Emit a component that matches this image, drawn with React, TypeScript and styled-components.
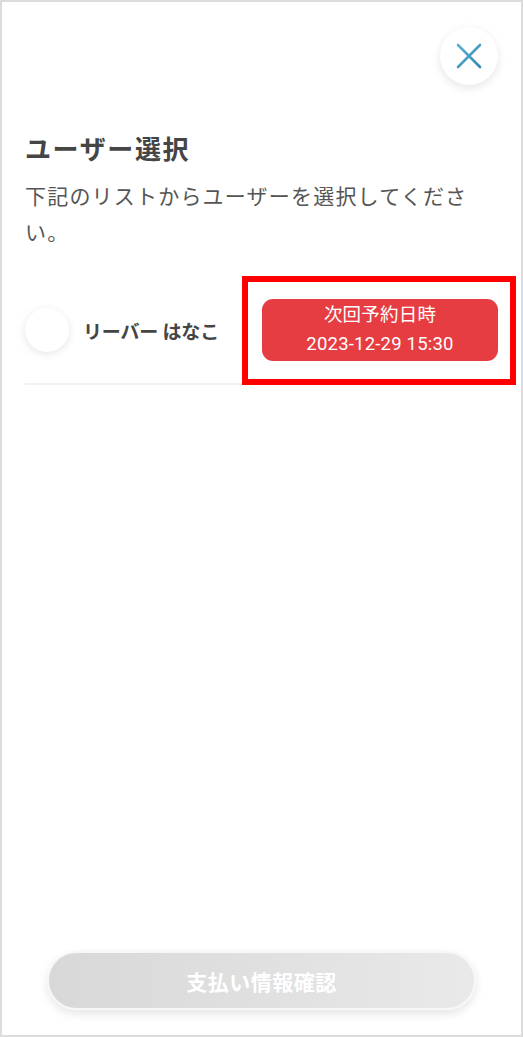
import React from "react";
import styled, { createGlobalStyle } from "styled-components";

const GlobalStyle = createGlobalStyle`
  html, body { margin: 0; padding: 0; background: #ffffff; }
  body { font-family: Roboto, "Noto Sans CJK JP", sans-serif; }
  * { box-sizing: border-box; }
`;

const Frame = styled.div`
  width: 523px;
  height: 1037px;
  border: 2px solid #dcdcdc;
  background: #ffffff;
  display: flex;
  flex-direction: column;
  padding: 25px 23px 25px;
`;

const Header = styled.div`
  display: flex;
  justify-content: flex-end;
`;

const CloseButton = styled.button`
  width: 58px;
  height: 58px;
  border-radius: 50%;
  border: none;
  background: #ffffff;
  box-shadow: 0 3px 10px rgba(0, 0, 0, 0.1);
  display: flex;
  align-items: center;
  justify-content: center;
  padding: 0;
  cursor: pointer;
`;

const Title = styled.h1`
  margin: 45px 0 0;
  font-family: Roboto, "Noto Sans CJK JP", sans-serif;
  font-size: 26px;
  line-height: 40px;
  font-weight: 700;
  letter-spacing: 1.6px;
  color: #454545;
`;

const Description = styled.p`
  margin: 9px 0 0;
  padding-right: 16px;
  font-size: 21px;
  line-height: 36px;
  letter-spacing: 1.2px;
  color: #555555;
`;

const UserRow = styled.div`
  margin-top: 26px;
  display: flex;
  align-items: center;
  justify-content: space-between;
  padding: 22px 0 22px;
  border-bottom: 2px solid #f1f1f1;
`;

const UserInfo = styled.div`
  display: flex;
  align-items: center;
  gap: 14px;
`;

const Avatar = styled.div`
  width: 44px;
  height: 44px;
  border-radius: 50%;
  background: #ffffff;
  box-shadow: 0 2px 8px rgba(0, 0, 0, 0.1);
`;

const UserName = styled.span`
  font-size: 19px;
  font-weight: 700;
  color: #454545;
  letter-spacing: -0.2px;
`;

const BadgeWrap = styled.div`
  position: relative;
`;

const Badge = styled.div`
  width: 236px;
  height: 62px;
  border-radius: 11px;
  background: #e63d42;
  color: #ffffff;
  display: flex;
  flex-direction: column;
  align-items: center;
  justify-content: center;
  font-size: 18.5px;
  line-height: 29px;
  letter-spacing: 0.2px;
`;

const Highlight = styled.div`
  position: absolute;
  top: -23px;
  bottom: -24px;
  left: -20px;
  right: -18px;
  border: 6px solid #ff0000;
  pointer-events: none;
`;

const Spacer = styled.div`
  flex: 1;
`;

const ConfirmButton = styled.button`
  margin: 0 22px 0 22px;
  height: 59px;
  border-radius: 30px;
  border: 2px solid #f7f7f7;
  background: linear-gradient(90deg, #d8d8d8 0%, #e0e0e0 50%, #e9e9e9 100%);
  box-shadow: 0 4px 10px rgba(0, 0, 0, 0.1);
  color: #ffffff;
  font-family: Roboto, "Noto Sans CJK JP", sans-serif;
  font-size: 21px;
  font-weight: 700;
  letter-spacing: 0.5px;
  display: flex;
  align-items: center;
  justify-content: center;
`;

const CloseIcon = () => (
  <svg width="26" height="26" viewBox="0 0 26 26" fill="none">
    <defs>
      <linearGradient id="xg" x1="0" y1="0" x2="1" y2="1">
        <stop offset="0" stopColor="#5eb0d6" />
        <stop offset="1" stopColor="#3489b2" />
      </linearGradient>
    </defs>
    <path d="M2 2 L24 24 M24 2 L2 24" stroke="url(#xg)" strokeWidth="2.6" strokeLinecap="round" />
  </svg>
);

export default function App() {
  return (
    <>
      <GlobalStyle />
      <Frame>
        <Header>
          <CloseButton aria-label="閉じる">
            <CloseIcon />
          </CloseButton>
        </Header>
        <Title>ユーザー選択</Title>
        <Description>下記のリストからユーザーを選択してください。</Description>
        <UserRow>
          <UserInfo>
            <Avatar />
            <UserName>リーバー はなこ</UserName>
          </UserInfo>
          <BadgeWrap>
            <Badge>
              <span>次回予約日時</span>
              <span>2023-12-29 15:30</span>
            </Badge>
            <Highlight />
          </BadgeWrap>
        </UserRow>
        <Spacer />
        <ConfirmButton>支払い情報確認</ConfirmButton>
      </Frame>
    </>
  );
}
